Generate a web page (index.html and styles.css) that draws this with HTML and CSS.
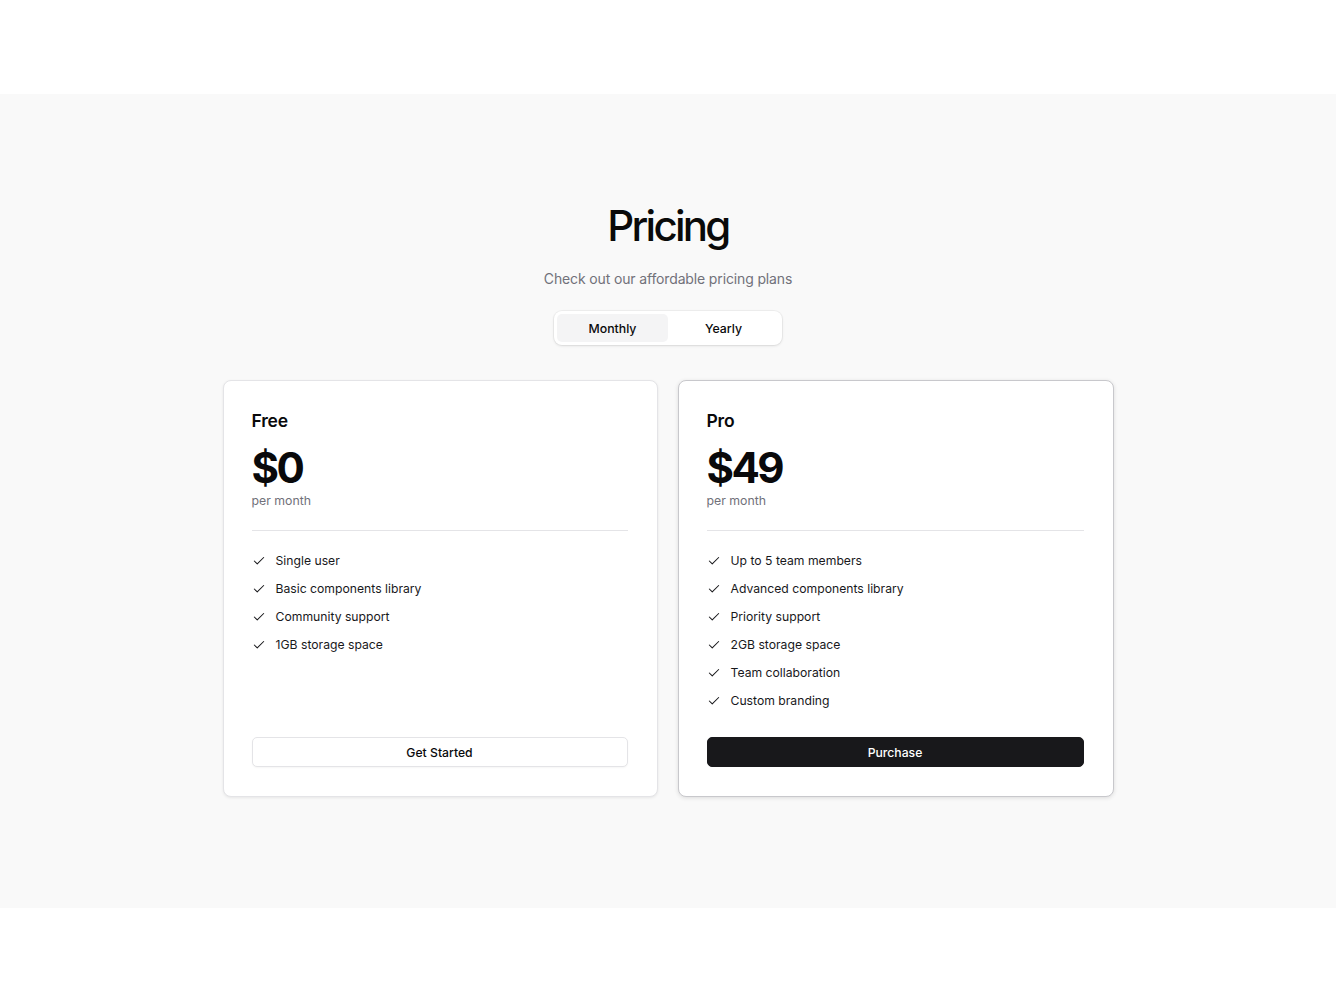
FILE: index.html
```html
<!DOCTYPE html>
<html lang="en">
<head>
<meta charset="utf-8">
<title>Pricing</title>
<link rel="stylesheet" href="styles.css">
</head>
<body>
<section class="pricing">
  <h1 class="title">Pricing</h1>
  <p class="subtitle">Check out our affordable pricing plans</p>
  <div class="toggle">
    <button class="toggle-btn active">Monthly</button>
    <button class="toggle-btn">Yearly</button>
  </div>
  <div class="cards">
    <div class="card">
      <h2 class="plan">Free</h2>
      <div class="price">$0</div>
      <div class="period">per month</div>
      <hr class="divider">
      <ul class="features">
        <li><svg class="check" viewBox="0 0 24 24"><path d="M20 6 9 17l-5-5"/></svg>Single user</li>
        <li><svg class="check" viewBox="0 0 24 24"><path d="M20 6 9 17l-5-5"/></svg>Basic components library</li>
        <li><svg class="check" viewBox="0 0 24 24"><path d="M20 6 9 17l-5-5"/></svg>Community support</li>
        <li><svg class="check" viewBox="0 0 24 24"><path d="M20 6 9 17l-5-5"/></svg>1GB storage space</li>
      </ul>
      <button class="btn btn-outline">Get Started</button>
    </div>
    <div class="card card-pro">
      <h2 class="plan">Pro</h2>
      <div class="price">$49</div>
      <div class="period">per month</div>
      <hr class="divider">
      <ul class="features">
        <li><svg class="check" viewBox="0 0 24 24"><path d="M20 6 9 17l-5-5"/></svg>Up to 5 team members</li>
        <li><svg class="check" viewBox="0 0 24 24"><path d="M20 6 9 17l-5-5"/></svg>Advanced components library</li>
        <li><svg class="check" viewBox="0 0 24 24"><path d="M20 6 9 17l-5-5"/></svg>Priority support</li>
        <li><svg class="check" viewBox="0 0 24 24"><path d="M20 6 9 17l-5-5"/></svg>2GB storage space</li>
        <li><svg class="check" viewBox="0 0 24 24"><path d="M20 6 9 17l-5-5"/></svg>Team collaboration</li>
        <li><svg class="check" viewBox="0 0 24 24"><path d="M20 6 9 17l-5-5"/></svg>Custom branding</li>
      </ul>
      <button class="btn btn-dark">Purchase</button>
    </div>
  </div>
</section>
</body>
</html>
```
FILE: styles.css
```css
* { box-sizing: border-box; }
html, body {
  margin: 0;
  padding: 0;
  background: #ffffff;
  font-family: Inter, "Noto Sans", sans-serif;
  color: #09090b;
}
body { padding-top: 94px; }
.pricing {
  background: #f9f9f9;
  height: 814px;
  display: flex;
  flex-direction: column;
  align-items: center;
  padding-top: 104px;
}
.title {
  margin: 0;
  font-size: 42px;
  line-height: 56px;
  font-weight: 500;
  letter-spacing: -0.065em;
  color: #0a0a0a;
}
.subtitle {
  margin: 15px 0 0;
  font-size: 14px;
  line-height: 20px;
  letter-spacing: -0.01em;
  color: #71717a;
}
.toggle {
  margin-top: 22px;
  display: flex;
  padding: 3px;
  background: #ffffff;
  border-radius: 8px;
  box-shadow: 0 0 0 1px rgba(0,0,0,0.04), 0 1px 3px rgba(0,0,0,0.1);
  width: 228px;
  height: 34px;
}
.toggle-btn {
  flex: 1;
  border: 0;
  background: transparent;
  font-family: inherit;
  font-size: 12.3px;
  font-weight: 500;
  color: #09090b;
  border-radius: 5px;
  padding: 0;
}
.toggle-btn.active { background: #f4f4f5; }
.cards {
  margin-top: 35px;
  display: grid;
  grid-template-columns: 435px 436px;
  gap: 20px;
}
.card {
  background: #ffffff;
  border: 1px solid #e4e4e7;
  border-radius: 8px;
  box-shadow: 0 1px 3px rgba(0,0,0,0.08);
  padding: 26px 29px 29px 28px;
  height: 417px;
  display: flex;
  flex-direction: column;
}
.card-pro {
  border-color: #c8c8cc;
  box-shadow: 0 1px 4px rgba(0,0,0,0.12);
}
.plan {
  margin: 0;
  font-size: 17.5px;
  line-height: 28px;
  font-weight: 600;
  letter-spacing: -0.01em;
}
.price {
  margin-top: 11px;
  font-size: 42px;
  line-height: 44px;
  font-weight: 700;
  letter-spacing: -0.06em;
}
.period {
  margin-top: 2px;
  font-size: 12.3px;
  line-height: 18px;
  color: #71717a;
}
.divider {
  border: 0;
  height: 1px;
  background: #e4e4e7;
  margin: 20px 0 21px;
}
.features {
  list-style: none;
  margin: 0;
  padding: 0;
  display: flex;
  flex-direction: column;
  gap: 10px;
  flex: 1;
}
.features li {
  display: flex;
  align-items: center;
  gap: 10px;
  font-size: 12.2px;
  line-height: 18px;
  color: #18181b;
}
.check {
  width: 14px;
  height: 14px;
  flex: none;
  fill: none;
  stroke: #18181b;
  stroke-width: 1.8;
  stroke-linecap: round;
  stroke-linejoin: round;
}
.btn {
  height: 30px;
  border-radius: 5px;
  font-family: inherit;
  font-size: 12.2px;
  font-weight: 500;
  width: 100%;
}
.btn-outline {
  background: #ffffff;
  border: 1px solid #e4e4e7;
  color: #09090b;
  box-shadow: 0 1px 2px rgba(0,0,0,0.04);
}
.btn-dark {
  background: #18181b;
  border: 1px solid #18181b;
  color: #ffffff;
}
```
